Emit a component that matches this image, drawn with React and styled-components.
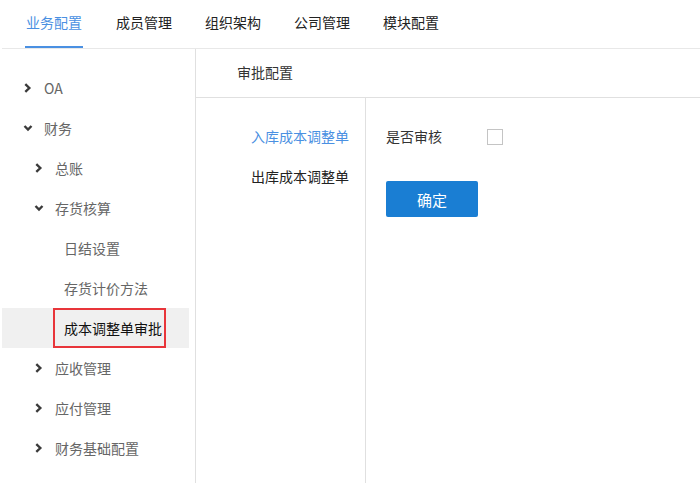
import React, { useState } from "react";
import styled, { createGlobalStyle } from "styled-components";

const GlobalStyle = createGlobalStyle`
  body {
    margin: 0;
    font-family: "Noto Sans CJK SC", "Liberation Sans", sans-serif;
    font-size: 14px;
    color: #333;
    background: #fff;
  }
`;

const tabs = ["业务配置", "成员管理", "组织架构", "公司管理", "模块配置"];

const tree = [
  { label: "OA", level: 1, arrow: "right" },
  { label: "财务", level: 1, arrow: "down" },
  { label: "总账", level: 2, arrow: "right" },
  { label: "存货核算", level: 2, arrow: "down" },
  { label: "日结设置", level: 3 },
  { label: "存货计价方法", level: 3 },
  { label: "成本调整单审批", level: 3, selected: true },
  { label: "应收管理", level: 2, arrow: "right" },
  { label: "应付管理", level: 2, arrow: "right" },
  { label: "财务基础配置", level: 2, arrow: "right" },
];

const Chevron = ({ dir }) => (
  <ArrowBox>
    <svg width="10" height="10" viewBox="0 0 10 10">
      {dir === "down" ? (
        <path d="M1.5 3 L5 6.5 L8.5 3" fill="none" stroke="#3a3a3a" strokeWidth="2.4" />
      ) : (
        <path d="M2.3 1.2 L6.3 5 L2.3 8.8" fill="none" stroke="#3a3a3a" strokeWidth="2.4" />
      )}
    </svg>
  </ArrowBox>
);

const App = () => {
  const [checked, setChecked] = useState(false);
  return (
    <Page>
      <GlobalStyle />
      <TopNav>
        {tabs.map((t, i) => (
          <Tab key={t} $active={i === 0}>
            {t}
          </Tab>
        ))}
      </TopNav>
      <Body>
        <Sidebar>
          {tree.map((n) => (
            <TreeItem key={n.label} $level={n.level} $selected={n.selected}>
              {n.arrow && <Chevron dir={n.arrow} />}
              {n.selected ? <Marked>{n.label}</Marked> : n.label}
            </TreeItem>
          ))}
        </Sidebar>
        <Main>
          <Header>审批配置</Header>
          <Content>
            <SubList>
              <SubItem $active>入库成本调整单</SubItem>
              <SubItem>出库成本调整单</SubItem>
            </SubList>
            <Form>
              <FormRow>
                <Label>是否审核</Label>
                <Check $on={checked} onClick={() => setChecked(!checked)} />
              </FormRow>
              <SubmitButton>确定</SubmitButton>
            </Form>
          </Content>
        </Main>
      </Body>
    </Page>
  );
};

const Page = styled.div`
  width: 700px;
  height: 483px;
  display: flex;
  flex-direction: column;
  overflow: hidden;
`;

const TopNav = styled.div`
  display: flex;
  gap: 33px;
  height: 48px;
  padding-left: 25px;
  margin-left: 2px;
  border-bottom: 1px solid #e8e8e8;
  box-sizing: content-box;
`;

const Tab = styled.div`
  height: 48px;
  line-height: 45px;
  box-sizing: border-box;
  margin-left: ${(p) => (p.$active ? "-2px" : "0")};
  padding: 0 ${(p) => (p.$active ? "1px" : "0")};
  color: ${(p) => (p.$active ? "#4a90e2" : "#222")};
  border-bottom: 2px solid ${(p) => (p.$active ? "#4a90e2" : "transparent")};
  cursor: pointer;
`;

const Body = styled.div`
  flex: 1;
  display: flex;
`;

const Sidebar = styled.div`
  width: 196px;
  box-sizing: border-box;
  border-right: 1px solid #e0e0e0;
  padding: 19px 6px 0 2px;
`;

const TreeItem = styled.div`
  height: 40px;
  display: flex;
  align-items: center;
  padding-left: ${(p) => (p.$level === 1 ? 21 : p.$level === 2 ? 32 : 62)}px;
  color: ${(p) => (p.$selected ? "#111" : "#666")};
  background: ${(p) => (p.$selected ? "#f0f0f0" : "transparent")};
  white-space: nowrap;
`;

const ArrowBox = styled.span`
  display: inline-flex;
  width: 21px;
  align-items: center;
`;

const Marked = styled.span`
  height: 40px;
  box-sizing: border-box;
  display: flex;
  align-items: center;
  margin-left: -11px;
  padding: 0 2px 1px 9px;
  border: 2px solid #e8353a;
`;

const Main = styled.div`
  flex: 1;
  display: flex;
  flex-direction: column;
`;

const Header = styled.div`
  height: 49px;
  box-sizing: border-box;
  display: flex;
  align-items: center;
  padding: 0 0 2px 41px;
  border-bottom: 1px solid #e0e0e0;
  color: #333;
`;

const Content = styled.div`
  flex: 1;
  display: flex;
`;

const SubList = styled.div`
  width: 170px;
  box-sizing: border-box;
  border-right: 1px solid #e0e0e0;
  padding: 18px 16px 0 0;
`;

const SubItem = styled.div`
  height: 40px;
  display: flex;
  align-items: center;
  justify-content: flex-end;
  color: ${(p) => (p.$active ? "#4a90e2" : "#222")};
  cursor: pointer;
`;

const Form = styled.div`
  padding: 18px 0 0 20px;
  display: flex;
  flex-direction: column;
  align-items: flex-start;
`;

const FormRow = styled.div`
  height: 40px;
  display: flex;
  align-items: center;
`;

const Label = styled.span`
  width: 101px;
  color: #333;
`;

const Check = styled.span`
  width: 16px;
  height: 16px;
  box-sizing: border-box;
  margin-top: 2px;
  border: 1px solid #c4c4c4;
  background: ${(p) => (p.$on ? "#1a7ed3" : "#fff")};
  cursor: pointer;
`;

const SubmitButton = styled.button`
  margin-top: 25px;
  width: 92px;
  height: 36px;
  border: none;
  border-radius: 2px;
  background: #1a7ed3;
  color: #fff;
  font-family: inherit;
  font-size: 15px;
  cursor: pointer;
`;

export default App;
